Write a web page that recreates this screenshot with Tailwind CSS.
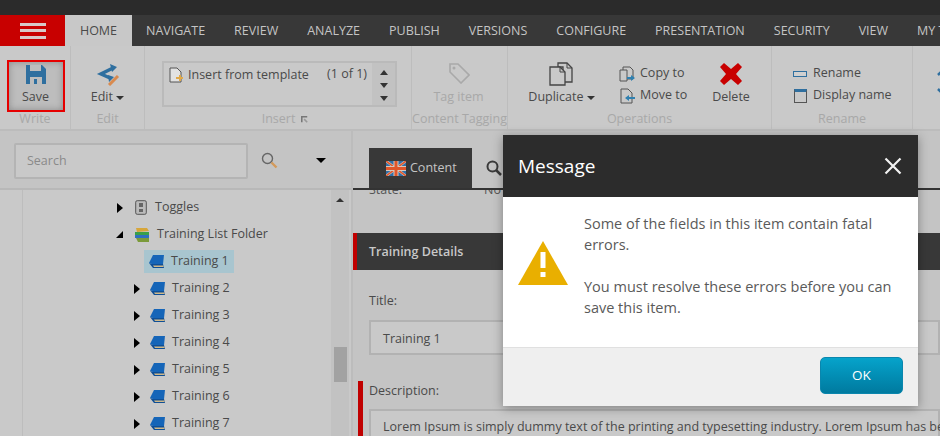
<!DOCTYPE html>
<html lang="en">
<head>
    <meta charset="UTF-8">
    <title>Message</title>
    <script src="https://cdn.jsdelivr.net/npm/@tailwindcss/browser@4"></script>
</head>
<body class="bg-[#c4c4c4]">
<div class="relative w-[940px] h-[436px] overflow-hidden font-['Open_Sans',sans-serif] text-[12.5px] text-[#4a4a4a]">

    <!-- Top bars -->
    <div class="h-[15px] bg-[#2b2b2b]"></div>
    <div class="h-[31px] bg-[#383838] flex text-[12.5px] text-[#c4c4c4] whitespace-nowrap">
        <div class="w-[65px] shrink-0 bg-[#c80000] flex flex-col items-center justify-center gap-[3.5px]">
            <span class="block w-[26px] h-[3px] bg-[#d8c8c8]"></span>
            <span class="block w-[26px] h-[3px] bg-[#d8c8c8]"></span>
            <span class="block w-[26px] h-[3px] bg-[#d8c8c8]"></span>
        </div>
        <div class="w-[67px] shrink-0 bg-[#c8c8c8] text-[#4a4a4a] flex items-center justify-center pt-[2px]">HOME</div>
        <div class="flex items-center pl-[14px] pt-[2px] gap-[29px]">
            <span>NAVIGATE</span><span>REVIEW</span><span>ANALYZE</span><span>PUBLISH</span><span>VERSIONS</span><span>CONFIGURE</span><span>PRESENTATION</span><span>SECURITY</span><span>VIEW</span><span>MY TOOLBAR</span>
        </div>
    </div>

    <!-- Ribbon -->
    <div class="h-[85px] bg-[#c9c9c9] border-b-2 border-[#bcbcbc] flex text-center">
        <!-- Write -->
        <div class="w-[71px] shrink-0 border-r border-[#bdbdbd] flex flex-col items-center">
            <div class="mt-[14px] self-start ml-[7px] w-[58px] h-[52px] border-2 border-[#e60000] bg-[#bdbdbd] shadow-[inset_0_0_7px_#8c8c8c] flex flex-col items-center">
                <svg class="mt-[2px] shrink-0" width="20" height="20" viewBox="0 0 20 20"><path fill="#2f6f9f" d="M0 1h16l4 4v15H0z"/><path fill="#bdbdbd" d="M4 1h11v6H4zM4 13h12v7H4z"/><path fill="#2f6f9f" d="M8 15h3v5H8z"/></svg>
                <span class="mt-[5px] ml-[-1px] leading-[16px]">Save</span>
            </div>
            <span class="mt-[-1px] text-[#a8a8a8] leading-[16px]">Write</span>
        </div>
        <!-- Edit -->
        <div class="w-[74px] shrink-0 border-r border-[#bdbdbd] flex flex-col items-center">
            <svg class="mt-[18px] shrink-0" width="24" height="22" viewBox="0 0 24 22"><path fill="none" stroke="#2f6f9f" stroke-width="3.5" d="M17 4 5 10l9 4"/><path fill="#2f6f9f" d="M14 0l7 3-5 5zM12 11l6 2-5 5z"/><path stroke="#d98a4e" stroke-width="3" d="m13 21 9-9"/></svg>
            <span class="mt-[3px] leading-[16px]">Edit <i class="inline-block align-middle border-x-[4px] border-t-[4px] border-x-transparent border-t-[#333]"></i></span>
            <span class="mt-[6px] text-[#a8a8a8] leading-[16px]">Edit</span>
        </div>
        <!-- Insert -->
        <div class="w-[267px] shrink-0 border-r border-[#bdbdbd] flex flex-col">
            <div class="mt-[15px] ml-[17px] w-[235px] h-[46px] border-2 border-[#bababa] flex justify-between">
                <div class="flex items-start pl-[5px] pt-[3px]">
                    <svg class="mt-[1px]" width="14" height="16" viewBox="0 0 14 16"><path fill="#e2e2e2" stroke="#555" d="M1 1h7l4 4v10H1z"/><path fill="#e0a94a" d="M7 10h3V8h2v2h2v2h-2v2h-2v-2H7z"/></svg>
                    <span class="ml-[5px] leading-[18px]">Insert from template</span>
                </div>
                <div class="flex">
                    <span class="pt-[2px] pr-[5px] leading-[18px]">(1 of 1)</span>
                    <div class="w-[23px] bg-[#c2c2c2] flex flex-col items-center pt-[7px] gap-[8px]">
                        <i class="block border-x-[4px] border-b-[5px] border-x-transparent border-b-[#333]"></i>
                        <i class="block border-x-[4px] border-t-[5px] border-x-transparent border-t-[#333]"></i>
                        <i class="block border-x-[4px] border-t-[5px] border-x-transparent border-t-[#333]"></i>
                    </div>
                </div>
            </div>
            <div class="mt-[4px] flex justify-center items-center gap-[6px] text-[#a8a8a8] leading-[16px]">
                <span class="ml-[14px]">Insert</span>
                <svg width="7" height="7" viewBox="0 0 9 9"><path fill="none" stroke="#777" stroke-width="2" d="M1 8V1h7"/><path stroke="#999" stroke-width="2" d="m4 4 4 4"/></svg>
            </div>
        </div>
        <!-- Content Tagging -->
        <div class="w-[96px] shrink-0 border-r border-[#bdbdbd] flex flex-col items-center">
            <svg class="mt-[17px] shrink-0" width="21" height="21" viewBox="0 0 21 21"><path fill="none" stroke="#a9a9a9" stroke-width="1.6" d="M1 1h8l11 11-8 8L1 9z"/><circle cx="5" cy="5" r="1.5" fill="#a9a9a9"/></svg>
            <span class="mt-[5px] ml-[-2px] text-[#a8a8a8] leading-[16px]">Tag item</span>
            <span class="mt-[6px] text-[#a8a8a8] leading-[16px] whitespace-nowrap">Content Tagging</span>
        </div>
        <!-- Operations -->
        <div class="w-[264px] shrink-0 border-r border-[#bdbdbd] flex flex-col">
            <div class="flex h-[65px] shrink-0">
                <div class="w-[105px] flex flex-col items-center">
                    <svg class="mt-[16px] shrink-0" width="24" height="24" viewBox="0 0 24 24"><path fill="#c9c9c9" stroke="#444" stroke-width="1.3" d="M9 1h9l5 5v14H14V5H9z"/><path fill="#c9c9c9" stroke="#444" stroke-width="1.3" d="M1 5h10l5 5v13H1z"/><path fill="none" stroke="#444" d="M11 5v5h5M18 1v5h5"/></svg>
                    <span class="mt-[3px] ml-[2px] leading-[16px]">Duplicate <i class="inline-block align-middle border-x-[4px] border-t-[4px] border-x-transparent border-t-[#333]"></i></span>
                </div>
                <div class="w-[86px] flex flex-col items-start pl-[6px] pt-[19px] gap-[5px]">
                    <div class="flex items-center gap-[5px] h-[17px]">
                        <svg width="16" height="16" viewBox="0 0 16 16"><path fill="#c9c9c9" stroke="#555" d="M4 1h7l3 3v9H4z"/><path fill="#c9c9c9" stroke="#555" d="M1 4h7v11H1z"/><path fill="#2f80b0" d="M8 11h4V9l4 3-4 3v-2H8z"/></svg>
                        <span>Copy to</span>
                    </div>
                    <div class="flex items-center gap-[5px] h-[17px]">
                        <svg width="16" height="16" viewBox="0 0 16 16"><path fill="#c9c9c9" stroke="#555" d="M2 1h7l4 4v10H2z"/><path fill="#2f80b0" d="M16 9h-6V7l-4 3 4 3v-2h6z"/></svg>
                        <span>Move to</span>
                    </div>
                </div>
                <div class="flex-1 flex flex-col items-center">
                    <svg class="mt-[17px] mr-[8px] shrink-0" width="24" height="22" viewBox="0 0 22 22"><path fill="#c80000" d="M4 0l7 6 7-6 4 4-6 7 6 7-4 4-7-6-7 6-4-4 6-7-6-7z"/></svg>
                    <span class="mt-[4px] mr-[8px] leading-[16px]">Delete</span>
                </div>
            </div>
            <span class="mt-[0px] text-[#a8a8a8] leading-[16px]">Operations</span>
        </div>
        <!-- Rename -->
        <div class="w-[141px] shrink-0 border-r border-[#bdbdbd] flex flex-col">
            <div class="h-[65px] shrink-0 pl-[21px] pt-[19px] flex flex-col gap-[5px]">
                <div class="flex items-center gap-[6px] h-[17px]">
                    <span class="block w-[14px] h-[6px] border border-[#2f6f9f] bg-[#d0d0d0]"></span>
                    <span>Rename</span>
                </div>
                <div class="flex items-center gap-[6px] h-[17px]">
                    <span class="block w-[13px] h-[14px] border border-[#555] border-t-[3px] border-t-[#2f6f9f] ml-[1px]"></span>
                    <span>Display name</span>
                </div>
            </div>
            <span class="mt-[0px] text-[#a8a8a8] leading-[16px]">Rename</span>
        </div>
        <!-- Clipped group -->
        <div class="flex-1 pl-[23px] pt-[23px]">
            <svg width="8" height="26" viewBox="0 0 8 26"><path fill="none" stroke="#2f6f9f" stroke-width="2.5" d="M7 1 2 6M7 25l-5-5"/></svg>
        </div>
    </div>

    <!-- Main -->
    <div class="flex h-[305px]">
        <!-- Left: search + tree -->
        <div class="w-[353px] border-r-2 border-[#bcbcbc] flex flex-col shrink-0">
            <div class="h-[59px] shrink-0 border-b-2 border-[#b8b8b8] flex items-center pl-[14px] pt-[2px]">
                <div class="w-[234px] h-[36px] border-2 border-[#b4b4b4] bg-[#c9c9c9] rounded-[2px] flex items-center pl-[11px] pt-[1px] text-[#8a8a8a]">Search</div>
                <svg class="ml-[13px]" width="17" height="17" viewBox="0 0 17 17"><circle cx="6.5" cy="6.5" r="5" fill="none" stroke="#666" stroke-width="1.4"/><path stroke="#d39a5c" stroke-width="2.4" d="m10.5 10.5 5 5"/></svg>
                <i class="block ml-[38px] border-x-[5px] border-t-[5px] border-x-transparent border-t-black"></i>
            </div>
            <div class="flex-1 min-h-0 overflow-hidden flex bg-[#c9c9c9]">
                <div class="w-[23px] border-r border-[#bdbdbd]"></div>
                <div class="flex-1 pt-[4px]">
                    <div class="h-[27px] flex items-center pl-[94px]">
                        <i class="block border-y-[5px] border-l-[6px] border-y-transparent border-l-black"></i>
                        <svg class="ml-[12px]" width="12" height="15" viewBox="0 0 12 15"><rect x=".7" y=".7" width="10.6" height="13.6" rx="1.5" fill="#bbb" stroke="#555"/><rect x="4" y="3" width="4" height="4" fill="#666"/><rect x="4" y="9" width="4" height="3" fill="#666"/></svg>
                        <span class="ml-[8px]">Toggles</span>
                    </div>
                    <div class="h-[27px] flex items-center pl-[93px]">
                        <svg width="7" height="7" viewBox="0 0 7 7"><path d="M7 0v7H0z"/></svg>
                        <svg class="ml-[11px]" width="16" height="16" viewBox="0 0 16 16"><path fill="#d7a63a" d="M2 1h11l2 3-12 1z"/><path fill="#3aa04a" d="M1 5h14v3H1z"/><path fill="#2f70c0" d="M1 8h14v3H1z"/><path fill="#7b9a3a" d="M2 11h13v4H4z"/></svg>
                        <span class="ml-[7px]">Training List Folder</span>
                    </div>
                    <div class="h-[27px] flex items-center pl-[121px]">
                        <div class="w-[90px] h-[23px] bg-[#a8c5cf] flex items-center pl-[5px]">
                            <svg width="16" height="14" viewBox="0 0 16 14"><path fill="#1565b8" d="M4 0h11l-1 9H3L0 8z"/><path fill="#0f4f96" d="M0 8l4 5h11l-1-4H3z"/><path fill="#d0b98a" d="M4 10.5h10.5v1.5H5z"/></svg>
                            <span class="ml-[6px]">Training 1</span>
                        </div>
                    </div>
                    <div class="h-[27px] flex items-center pl-[111px]">
                        <i class="block border-y-[5px] border-l-[6px] border-y-transparent border-l-black"></i>
                        <svg class="ml-[10px]" width="16" height="14" viewBox="0 0 16 14"><path fill="#1565b8" d="M4 0h11l-1 9H3L0 8z"/><path fill="#0f4f96" d="M0 8l4 5h11l-1-4H3z"/><path fill="#d0b98a" d="M4 10.5h10.5v1.5H5z"/></svg>
                        <span class="ml-[6px]">Training 2</span>
                    </div>
                    <div class="h-[27px] flex items-center pl-[111px]">
                        <i class="block border-y-[5px] border-l-[6px] border-y-transparent border-l-black"></i>
                        <svg class="ml-[10px]" width="16" height="14" viewBox="0 0 16 14"><path fill="#1565b8" d="M4 0h11l-1 9H3L0 8z"/><path fill="#0f4f96" d="M0 8l4 5h11l-1-4H3z"/><path fill="#d0b98a" d="M4 10.5h10.5v1.5H5z"/></svg>
                        <span class="ml-[6px]">Training 3</span>
                    </div>
                    <div class="h-[27px] flex items-center pl-[111px]">
                        <i class="block border-y-[5px] border-l-[6px] border-y-transparent border-l-black"></i>
                        <svg class="ml-[10px]" width="16" height="14" viewBox="0 0 16 14"><path fill="#1565b8" d="M4 0h11l-1 9H3L0 8z"/><path fill="#0f4f96" d="M0 8l4 5h11l-1-4H3z"/><path fill="#d0b98a" d="M4 10.5h10.5v1.5H5z"/></svg>
                        <span class="ml-[6px]">Training 4</span>
                    </div>
                    <div class="h-[27px] flex items-center pl-[111px]">
                        <i class="block border-y-[5px] border-l-[6px] border-y-transparent border-l-black"></i>
                        <svg class="ml-[10px]" width="16" height="14" viewBox="0 0 16 14"><path fill="#1565b8" d="M4 0h11l-1 9H3L0 8z"/><path fill="#0f4f96" d="M0 8l4 5h11l-1-4H3z"/><path fill="#d0b98a" d="M4 10.5h10.5v1.5H5z"/></svg>
                        <span class="ml-[6px]">Training 5</span>
                    </div>
                    <div class="h-[27px] flex items-center pl-[111px]">
                        <i class="block border-y-[5px] border-l-[6px] border-y-transparent border-l-black"></i>
                        <svg class="ml-[10px]" width="16" height="14" viewBox="0 0 16 14"><path fill="#1565b8" d="M4 0h11l-1 9H3L0 8z"/><path fill="#0f4f96" d="M0 8l4 5h11l-1-4H3z"/><path fill="#d0b98a" d="M4 10.5h10.5v1.5H5z"/></svg>
                        <span class="ml-[6px]">Training 6</span>
                    </div>
                    <div class="h-[27px] flex items-center pl-[111px]">
                        <i class="block border-y-[5px] border-l-[6px] border-y-transparent border-l-black"></i>
                        <svg class="ml-[10px]" width="16" height="14" viewBox="0 0 16 14"><path fill="#1565b8" d="M4 0h11l-1 9H3L0 8z"/><path fill="#0f4f96" d="M0 8l4 5h11l-1-4H3z"/><path fill="#d0b98a" d="M4 10.5h10.5v1.5H5z"/></svg>
                        <span class="ml-[6px]">Training 7</span>
                    </div>
                </div>
                <!-- Scrollbar -->
                <div class="w-[18px] mr-[2px] bg-[#c2c2c2] relative">
                    <i class="absolute left-[5px] top-[8px] border-x-[4px] border-b-[4px] border-x-transparent border-b-[#333]"></i>
                    <span class="absolute left-[3px] top-[157px] w-[13px] h-[35px] bg-[#a2a2a2]"></span>
                </div>
            </div>
        </div>

        <!-- Right: editor -->
        <div class="flex-1 bg-[#c4c4c4] min-w-0">
            <div class="h-[59px] pl-[16px] pt-[17px] border-b-2 border-[#333]">
                <div class="w-[103px] h-[40px] bg-[#383838] flex items-center pl-[17px] pt-[1px] text-[#c4c4c4]">
                    <svg width="20" height="15" viewBox="0 0 20 15"><rect width="20" height="15" fill="#2f6fa8"/><path stroke="#d8c8bc" stroke-width="2.5" d="m0 0 20 15M20 0 0 15"/><path stroke="#e0562a" stroke-width="1.5" d="m0 0 20 15M20 0 0 15"/><path stroke="#d8c8bc" stroke-width="5" d="M10 0v15M0 7.500h20"/><path stroke="#e0562a" stroke-width="3" d="M10 0v15M0 7.500h20"/></svg>
                    <span class="ml-[4px]">Content</span>
                </div>
            </div>
            <div class="h-[43px] overflow-hidden">
                <div class="flex pl-[16px] mt-[-9px] text-[#555] leading-[18px]">
                    <span class="w-[115px]">State:</span><span>No</span>
                </div>
            </div>
            <div class="h-[37px] bg-[#383838] border-l-4 border-[#c00000] pl-[12px] pt-[2px] flex items-center font-semibold text-[#c8c8c8] whitespace-nowrap">Training Details</div>
            <div class="pl-[16px] pt-[22px] leading-[18px]">Title:</div>
            <div class="ml-[16px] mt-[10px] h-[35px] border-2 border-[#b2b2b2] bg-[#c9c9c9] flex items-center pl-[12px] pt-[3px]">Training 1</div>
            <div class="ml-[5px] mt-[26px] border-l-[5px] border-[#c00000] pl-[6px] h-[60px]">
                <div class="pt-[1px] leading-[18px]">Description:</div>
                <div class="mt-[9px] h-[40px] border-2 border-[#b2b2b2] bg-[#c9c9c9] pl-[12px] pt-[7px] whitespace-nowrap">Lorem Ipsum is simply dummy text of the printing and typesetting industry. Lorem Ipsum has been</div>
            </div>
        </div>
    </div>

    <!-- Search tab icon peeking out beside the modal -->
    <svg class="absolute left-[486px] top-[160px]" width="16" height="16" viewBox="0 0 16 16"><circle cx="6.500" cy="6.500" r="5" fill="none" stroke="#3a3a3a" stroke-width="2"/><path stroke="#3a3a3a" stroke-width="2.500" d="m10 10 5 5"/></svg>

    <!-- Modal -->
    <div class="absolute left-[503px] top-[135px] w-[415px] h-[271px] bg-white flex flex-col shadow-[0_2px_10px_rgba(0,0,0,0.35)]">
        <div class="h-[62px] bg-[#2c2c2c] flex items-center justify-between pl-[15px] pr-[16px] text-white">
            <span class="text-[19px]">Message</span>
            <svg width="18" height="18" viewBox="0 0 18 18"><path stroke="#f2f2f2" stroke-width="2.200" d="m1.500 1.500 15 15M16.500 1.500l-15 15"/></svg>
        </div>
        <div class="h-[151px] flex border-b border-[#e0e0e0]">
            <div class="w-[81px] shrink-0 pl-[15px] pt-[44px]">
                <svg width="50" height="44" viewBox="0 0 50 44"><path fill="#e9af00" d="M25 0 50 44H0z"/><path fill="#fff" d="M22.500 11h5v16h-5zM22.500 31h5v5h-5z"/></svg>
            </div>
            <div class="w-[320px] pt-[16px] text-[14.5px] leading-[21px] text-[#5a5a5a]">
                <p>Some of the fields in this item contain fatal errors.</p>
                <p class="mt-[21px]">You must resolve these errors before you can save this item.</p>
            </div>
        </div>
        <div class="flex-1 bg-[#efefef] flex items-start justify-end pt-[9px] pr-[15px]">
            <div class="w-[83px] h-[37px] rounded-[5px] border border-[#0a86ad] bg-gradient-to-b from-[#06a3cb] to-[#007a9f] flex items-center justify-center text-white text-[13.5px]">OK</div>
        </div>
    </div>
</div>
</body>
</html>
